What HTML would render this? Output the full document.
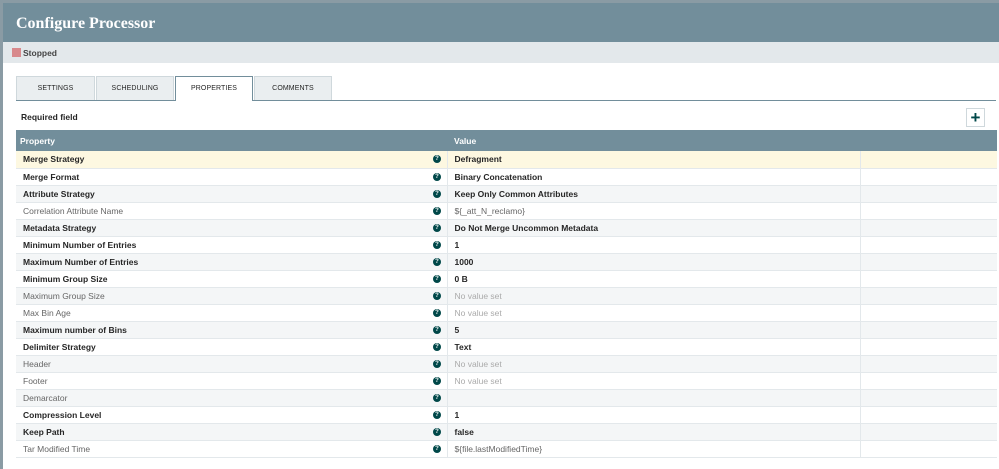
<!DOCTYPE html>
<html><head><style>
*{margin:0;padding:0;box-sizing:border-box}
body{width:999px;height:469px;overflow:hidden;background:#8a9ba4;font-family:"Liberation Sans",sans-serif;position:relative}
#dlg{position:absolute;left:3px;top:3px;width:996px;height:466px;background:#fff}
#hd{height:39px;background:#728e9b;color:#fff;font-family:"Liberation Serif",serif;font-weight:bold;font-size:16px;padding:12px 0 0 13px}
#st{height:21px;background:#e3e8eb;font-size:8.5px;font-weight:bold;color:#444;padding:6px 0 0 9px}
#st i{display:inline-block;width:9px;height:9px;background:#d8898c;vertical-align:-1px;margin-right:2px}
.tab{position:absolute;top:76px;height:24px;background:#eaeef0;border:1px solid #cfd8dc;border-bottom:none;font-size:7px;color:#262626;text-align:center;line-height:23px;letter-spacing:.1px}
.tab.a{background:#fff;border-color:#728e9b;height:25px}
#tl{position:absolute;left:16px;top:100px;width:980px;height:1px;background:#728e9b}
#rf{position:absolute;left:21px;top:112px;font-size:8.5px;font-weight:bold;color:#262626}
#plus{position:absolute;left:966px;top:108px;width:19px;height:19px;border:1px solid #cfd8dc;background:#fff;color:#004849;font-weight:bold;font-size:17px;text-align:center;line-height:17px}
table{position:absolute;left:16px;top:130px;width:981px;border-collapse:collapse;font-size:8.5px}
th{background:#728e9b;color:#fff;text-align:left;height:21px;padding-left:4px;font-size:8.5px}
td{height:17px;border-bottom:1px solid #e3e8eb;color:#666;padding-left:7px;white-space:nowrap}
tr:nth-child(even) td{background:#f4f6f7}
tr.hl td{background:#fdf8e1}
td.p{width:431px;position:relative}
td.v{width:413px;border-left:1px solid #e3e8eb}
td.e{border-left:1px solid #e3e8eb}
.b{font-weight:bold;color:#262626}
td.n{color:#aaa}
.q{position:absolute;left:417px;top:4px;width:8px;height:8px;border-radius:50%;background:#004849;color:#fff;font-size:6px;line-height:8px;text-align:center;font-weight:bold}
</style></head><body><div id="dlg">
<div id="hd">Configure Processor</div>
<div id="st"><i></i>Stopped</div>
</div>
<div class="tab" style="left:16px;width:79px">SETTINGS</div>
<div class="tab" style="left:96px;width:78px">SCHEDULING</div>
<div class="tab a" style="left:175px;width:78px">PROPERTIES</div>
<div class="tab" style="left:254px;width:78px">COMMENTS</div>
<div id="tl"></div><div style="position:absolute;left:176px;top:100px;width:76px;height:1px;background:#fff"></div>
<div id="rf">Required field</div>
<div id="plus">+</div>
<table>
<tr><th style="padding-left:4px">Property</th><th colspan="2" style="padding-left:7px">Value</th></tr>
<tr class="hl"><td class="p b">Merge Strategy<span class="q">?</span></td><td class="v b">Defragment</td><td class="e"></td></tr>
<tr><td class="p b">Merge Format<span class="q">?</span></td><td class="v b">Binary Concatenation</td><td class="e"></td></tr>
<tr><td class="p b">Attribute Strategy<span class="q">?</span></td><td class="v b">Keep Only Common Attributes</td><td class="e"></td></tr>
<tr><td class="p">Correlation Attribute Name<span class="q">?</span></td><td class="v">${_att_N_reclamo}</td><td class="e"></td></tr>
<tr><td class="p b">Metadata Strategy<span class="q">?</span></td><td class="v b">Do Not Merge Uncommon Metadata</td><td class="e"></td></tr>
<tr><td class="p b">Minimum Number of Entries<span class="q">?</span></td><td class="v b">1</td><td class="e"></td></tr>
<tr><td class="p b">Maximum Number of Entries<span class="q">?</span></td><td class="v b">1000</td><td class="e"></td></tr>
<tr><td class="p b">Minimum Group Size<span class="q">?</span></td><td class="v b">0 B</td><td class="e"></td></tr>
<tr><td class="p">Maximum Group Size<span class="q">?</span></td><td class="v n">No value set</td><td class="e"></td></tr>
<tr><td class="p">Max Bin Age<span class="q">?</span></td><td class="v n">No value set</td><td class="e"></td></tr>
<tr><td class="p b">Maximum number of Bins<span class="q">?</span></td><td class="v b">5</td><td class="e"></td></tr>
<tr><td class="p b">Delimiter Strategy<span class="q">?</span></td><td class="v b">Text</td><td class="e"></td></tr>
<tr><td class="p">Header<span class="q">?</span></td><td class="v n">No value set</td><td class="e"></td></tr>
<tr><td class="p">Footer<span class="q">?</span></td><td class="v n">No value set</td><td class="e"></td></tr>
<tr><td class="p">Demarcator<span class="q">?</span></td><td class="v"></td><td class="e"></td></tr>
<tr><td class="p b">Compression Level<span class="q">?</span></td><td class="v b">1</td><td class="e"></td></tr>
<tr><td class="p b">Keep Path<span class="q">?</span></td><td class="v b">false</td><td class="e"></td></tr>
<tr><td class="p">Tar Modified Time<span class="q">?</span></td><td class="v">${file.lastModifiedTime}</td><td class="e"></td></tr>
</table>
</body></html>
